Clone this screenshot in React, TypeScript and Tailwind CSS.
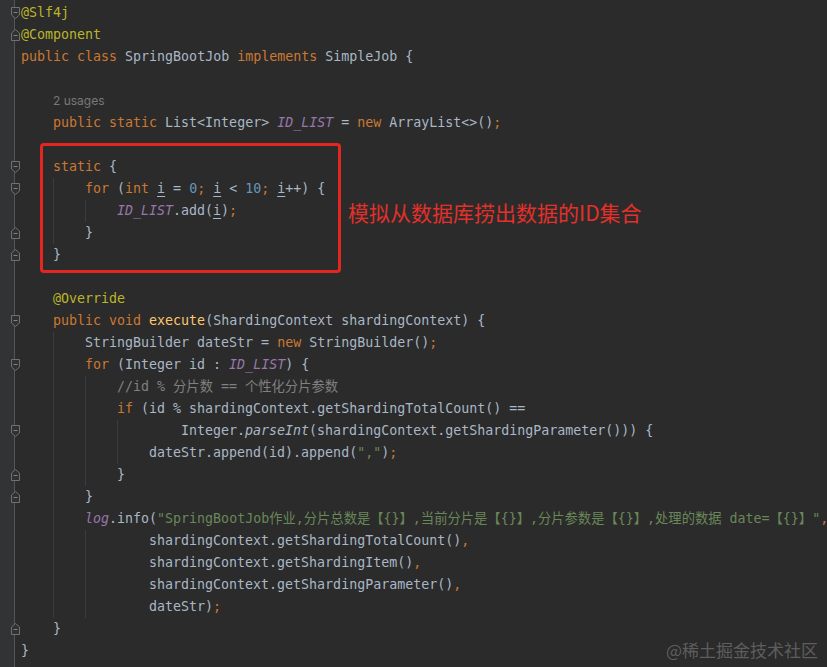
import React from "react";

type Tok = { t: string; c: string };

const K = "text-[#cc7832]";
const A = "text-[#bbb529]";
const T = "text-[#a9b7c6]";
const N = "text-[#6897bb]";
const S = "text-[#6a8759]";
const C = "text-[#808080]";
const F = "text-[#9876aa] italic";
const M = "text-[#ffc66d]";
const I = "text-[#a9b7c6] italic";
const U = "text-[#a9b7c6] underline underline-offset-[3px] decoration-[#a9b7c6]";

const k = (t: string): Tok => ({ t, c: K });
const a = (t: string): Tok => ({ t, c: A });
const x = (t: string): Tok => ({ t, c: T });
const n = (t: string): Tok => ({ t, c: N });
const s = (t: string): Tok => ({ t, c: S });
const cm = (t: string): Tok => ({ t, c: C });
const f = (t: string): Tok => ({ t, c: F });
const m = (t: string): Tok => ({ t, c: M });
const it = (t: string): Tok => ({ t, c: I });
const u = (t: string): Tok => ({ t, c: U });

type Line = {
  indent: number;
  guides?: number[];
  toks?: Tok[];
  hint?: string;
  fold?: "start" | "end";
};

const lines: Line[] = [
  { indent: 0, toks: [a("@Slf4j")], fold: "start" },
  { indent: 0, toks: [a("@Component")], fold: "end" },
  { indent: 0, toks: [k("public class "), x("SpringBootJob "), k("implements "), x("SimpleJob {")] },
  { indent: 0 },
  { indent: 1, hint: "2 usages" },
  {
    indent: 1,
    toks: [k("public static "), x("List<Integer> "), f("ID_LIST"), x(" = "), k("new "), x("ArrayList<>()"), k(";")],
  },
  { indent: 0 },
  { indent: 1, toks: [k("static "), x("{")], fold: "start" },
  {
    indent: 2,
    guides: [1],
    fold: "start",
    toks: [
      k("for "),
      x("("),
      k("int "),
      u("i"),
      x(" = "),
      n("0"),
      k("; "),
      u("i"),
      x(" < "),
      n("10"),
      k("; "),
      u("i"),
      x("++) {"),
    ],
  },
  { indent: 3, guides: [1, 2], toks: [f("ID_LIST"), x(".add("), u("i"), x(")"), k(";")] },
  { indent: 2, guides: [1], toks: [x("}")], fold: "end" },
  { indent: 1, toks: [x("}")], fold: "end" },
  { indent: 0 },
  { indent: 1, toks: [a("@Override")] },
  {
    indent: 1,
    fold: "start",
    toks: [k("public void "), m("execute"), x("(ShardingContext shardingContext) {")],
  },
  {
    indent: 2,
    guides: [1],
    toks: [x("StringBuilder dateStr = "), k("new "), x("StringBuilder()"), k(";")],
  },
  { indent: 2, guides: [1], fold: "start", toks: [k("for "), x("(Integer id : "), f("ID_LIST"), x(") {")] },
  { indent: 3, guides: [1, 2], toks: [cm("//id % 分片数 == 个性化分片参数")] },
  { indent: 3, guides: [1, 2], toks: [k("if "), x("(id % shardingContext.getShardingTotalCount() ==")] },
  {
    indent: 5,
    guides: [1, 2, 3],
    fold: "start",
    toks: [x("Integer."), it("parseInt"), x("(shardingContext.getShardingParameter())) {")],
  },
  {
    indent: 4,
    guides: [1, 2, 3],
    toks: [x("dateStr.append(id).append("), s('","'), x(")"), k(";")],
  },
  { indent: 3, guides: [1, 2], toks: [x("}")], fold: "end" },
  { indent: 2, guides: [1], toks: [x("}")], fold: "end" },
  {
    indent: 2,
    guides: [1],
    toks: [
      f("log"),
      x(".info("),
      s('"SpringBootJob作业,分片总数是【{}】,当前分片是【{}】,分片参数是【{}】,处理的数据 date=【{}】"'),
      k(","),
    ],
  },
  { indent: 4, guides: [1, 2], toks: [x("shardingContext.getShardingTotalCount()"), k(",")] },
  { indent: 4, guides: [1, 2], toks: [x("shardingContext.getShardingItem()"), k(",")] },
  { indent: 4, guides: [1, 2], toks: [x("shardingContext.getShardingParameter()"), k(",")] },
  { indent: 4, guides: [1, 2], toks: [x("dateStr)"), k(";")] },
  { indent: 1, toks: [x("}")], fold: "end" },
  { indent: 0, toks: [x("}")] },
];

function FoldIcon({ kind }: { kind: "start" | "end" }) {
  return (
    <svg width="9" height="12" viewBox="0 0 9 12" className="absolute left-[11px] top-[5px]">
      {kind === "start" ? (
        <path d="M0.5 0.5 H8.5 V8 L4.5 11.5 L0.5 8 Z" fill="#2f3133" stroke="#707070" strokeWidth="1" />
      ) : (
        <path d="M0.5 11.5 H8.5 V4 L4.5 0.5 L0.5 4 Z" fill="#2f3133" stroke="#707070" strokeWidth="1" />
      )}
      <path d={kind === "start" ? "M2.5 5.5 H6.5" : "M2.5 6.5 H6.5"} stroke="#808080" strokeWidth="1" />
    </svg>
  );
}

const mono = { fontFamily: '"DejaVu Sans Mono", "Noto Sans CJK SC", monospace' };

export default function App() {
  return (
    <div className="relative w-[827px] h-[667px] overflow-hidden bg-[#2b2b2b] flex">
      <div className="w-[15px] shrink-0 bg-[#313335] border-r border-[#555555] pt-[2px] flex flex-col">
        {lines.map((l, i) => (
          <div key={i} className="relative h-[22px] shrink-0">
            {l.fold && <FoldIcon kind={l.fold} />}
          </div>
        ))}
      </div>
      <div className="flex-1 pt-[2px] pl-[6px] flex flex-col text-[13.3px]" style={mono}>
        {lines.map((l, i) => {
          const blocks = Array.from({ length: l.indent }, (_, b) => b);
          return (
            <div key={i} className="h-[22px] shrink-0 flex items-stretch whitespace-pre">
              {blocks.map((b) => (
                <span
                  key={b}
                  className={
                    "w-[32px] shrink-0 " +
                    (l.guides && l.guides.includes(b) ? "border-l border-[#3c3c3c]" : "")
                  }
                />
              ))}
              {l.hint ? (
                <span
                  className="flex items-center text-[12px] text-[#787878]"
                  style={{ fontFamily: 'Inter, "Noto Sans", sans-serif' }}
                >
                  {l.hint}
                </span>
              ) : (
                <span className="flex items-center">
                  {l.toks?.map((tk, j) => (
                    <span key={j} className={tk.c}>
                      {tk.t}
                    </span>
                  ))}
                </span>
              )}
            </div>
          );
        })}
      </div>

      <div className="absolute left-[40px] top-[143px] w-[301px] h-[130px] border-[3px] border-[#e3261f] rounded-[4px]" />
      <div
        className="absolute left-[348px] top-[199px] text-[21px] leading-[26px] text-[#e3302a] whitespace-nowrap"
        style={{ fontFamily: '"Noto Sans CJK SC", "Noto Sans", sans-serif' }}
      >
        模拟从数据库捞出数据的ID集合
      </div>

      <div
        className="absolute right-[9px] bottom-[5px] text-[17px] leading-[24px] text-[#5e5e5e] whitespace-nowrap"
        style={{ fontFamily: '"Noto Sans CJK SC", "Noto Sans", sans-serif' }}
      >
        @稀土掘金技术社区
      </div>
    </div>
  );
}
